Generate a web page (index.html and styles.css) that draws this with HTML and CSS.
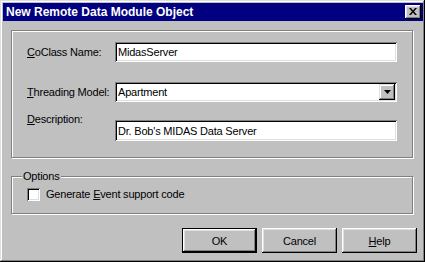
FILE: index.html
```html
<!DOCTYPE html>
<html lang="en">
<head>
<meta charset="UTF-8">
<title>New Remote Data Module Object</title>
<link rel="stylesheet" href="styles.css">
</head>
<body>

<div class="window">
  <div class="titlebar">
    <span class="title">New Remote Data Module Object</span>
    <button class="close-btn" aria-label="Close">
      <svg width="8" height="7" viewBox="0 0 8 7"><path d="M0 0h2l2 2.5L6 0h2L5 3.5 8 7H6L4 4.5 2 7H0l3-3.5z" fill="#000"/></svg>
    </button>
  </div>
  <div class="dialog-body">
    <div class="group fields">
      <label class="field-label"><u>C</u>oClass Name:</label>
      <div class="textbox">MidasServer</div>
      <label class="field-label"><u>T</u>hreading Model:</label>
      <div class="combo">
        <span class="combo-text">Apartment</span>
        <span class="combo-btn">
          <svg width="7" height="4" viewBox="0 0 7 4"><path d="M0 0h7L3.5 4z" fill="#000"/></svg>
        </span>
      </div>
      <label class="field-label raised"><u>D</u>escription:</label>
      <div class="textbox tall">Dr. Bob's MIDAS Data Server</div>
    </div>
    <div class="group options">
      <span class="group-title">Options</span>
      <label class="check"><span class="checkbox"></span><span>Generate <u>E</u>vent support code</span></label>
    </div>
    <div class="buttons">
      <button class="btn default">OK</button>
      <button class="btn">Cancel</button>
      <button class="btn"><u>H</u>elp</button>
    </div>
  </div>
</div>

</body>
</html>
```

FILE: styles.css
```css
body {
  margin: 0;
  background-color: #c0c0c0;
  font-family: 'Liberation Sans', Arial, sans-serif;
  font-size: 11px;
  letter-spacing: -0.2px;
  color: #000;
}
u {
  text-decoration: underline;
  text-underline-offset: 1px;
}
.window {
  width: 425px;
  height: 262px;
  box-sizing: border-box;
  padding: 3px 2px 3px 3px;
  background-color: #c0c0c0;
  box-shadow: inset -1px -1px #000, inset 1px 1px #dfdfdf, inset -2px -2px #808080, inset 2px 2px #fff;
}
.titlebar {
  height: 18px;
  background-color: #000080;
  display: flex;
  align-items: flex-start;
  justify-content: space-between;
  padding: 0 2px 0 3px;
}
.title {
  color: #fff;
  font-weight: bold;
  font-size: 12px;
  letter-spacing: 0;
  line-height: 18px;
}
.close-btn {
  width: 16px;
  height: 14px;
  margin-top: 2px;
  padding: 0;
  border: none;
  background-color: #c0c0c0;
  box-shadow: inset -1px -1px #000, inset 1px 1px #fff, inset -2px -2px #808080, inset 2px 2px #dfdfdf;
  display: flex;
  align-items: center;
  justify-content: center;
}
.close-btn svg {
  margin: 0 0 1px 0;
}
.dialog-body {
  padding: 9px 0 0 8px;
}
.group {
  border: 1px solid #808080;
  box-shadow: 1px 1px 0 #fff, inset 1px 1px 0 #fff;
  width: 402px;
  box-sizing: border-box;
}
.fields {
  display: grid;
  grid-template-columns: 88px 282px;
  grid-template-rows: 20px 20px 21px;
  row-gap: 20px;
  padding: 11px 15px 16px 15px;
  height: 128px;
}
.fields .tall {
  margin-top: -2px;
}
.field-label {
  align-self: center;
  line-height: 13px;
}
.field-label.raised {
  align-self: start;
  margin-top: -9px;
}
.textbox, .combo {
  background-color: #fff;
  box-shadow: inset 1px 1px #808080, inset -1px -1px #fff, inset 2px 2px #000, inset -2px -2px #dfdfdf;
  display: flex;
  align-items: center;
  padding: 0 3px;
  height: 20px;
  box-sizing: border-box;
}
.textbox.tall {
  height: 21px;
}
.combo {
  justify-content: space-between;
  padding-right: 2px;
}
.combo-btn {
  width: 16px;
  height: 16px;
  box-sizing: border-box;
  background-color: #c0c0c0;
  box-shadow: inset -1px -1px #000, inset 1px 1px #dfdfdf, inset -2px -2px #808080, inset 2px 2px #fff;
  display: flex;
  align-items: center;
  justify-content: center;
}
.options {
  position: relative;
  margin-top: 18px;
  height: 38px;
  padding: 11px 15px 0 15px;
}
.group-title {
  position: absolute;
  top: -7px;
  left: 10px;
  padding: 0 1px;
  background-color: #c0c0c0;
  line-height: 13px;
}
.check {
  display: flex;
  align-items: center;
  gap: 6px;
  line-height: 13px;
}
.checkbox {
  width: 13px;
  height: 13px;
  box-sizing: border-box;
  background-color: #fff;
  box-shadow: inset 1px 1px #808080, inset -1px -1px #fff, inset 2px 2px #000, inset -2px -2px #dfdfdf;
}
.buttons {
  display: flex;
  justify-content: flex-end;
  gap: 5px;
  margin-top: 14px;
  padding-right: 6px;
}
.btn {
  width: 75px;
  height: 25px;
  padding: 0;
  border: none;
  background-color: #c0c0c0;
  font-family: inherit;
  font-size: 11px;
  letter-spacing: -0.2px;
  color: #000;
  box-shadow: inset -1px -1px #000, inset 1px 1px #fff, inset -2px -2px #808080, inset 2px 2px #dfdfdf;
}
.btn.default {
  box-shadow: inset 0 0 0 1px #000, inset -2px -2px #000, inset 2px 2px #fff, inset -3px -3px #808080, inset 3px 3px #dfdfdf;
}
```
